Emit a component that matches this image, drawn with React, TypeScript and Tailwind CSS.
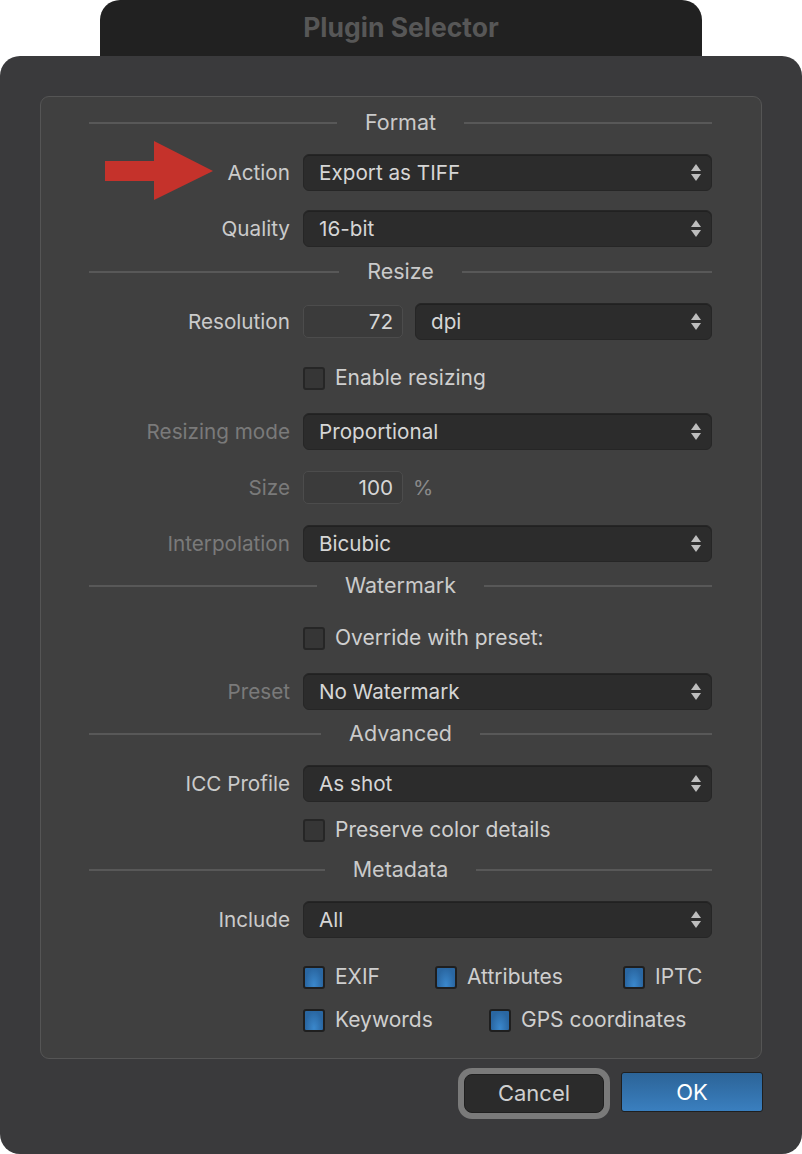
import React from 'react';

function SelectArrows() {
  return (
    <svg width="10" height="17" viewBox="0 0 10 17" className="shrink-0">
      <polygon points="5,0 10,7 0,7" fill="#bdbdbd" />
      <polygon points="0,10 10,10 5,17" fill="#bdbdbd" />
    </svg>
  );
}

function Select({ value, className = '' }: { value: string; className?: string }) {
  return (
    <div
      className={`h-[37px] flex items-center justify-between pl-[15px] pr-[10px] rounded-[6px] bg-[#2c2c2c] border border-[#262626] shadow-[inset_0_1px_0_rgba(0,0,0,0.25)] text-[20.7px] text-[#d6d6d6] ${className}`}
    >
      <span>{value}</span>
      <SelectArrows />
    </div>
  );
}

function NumberInput({ value }: { value: string }) {
  return (
    <div className="w-[100px] h-[33px] flex items-center justify-end pr-[9px] rounded-[5px] bg-[#3b3b3b] border border-[#4c4c4c] text-[20.7px] text-[#d6d6d6] shrink-0">
      {value}
    </div>
  );
}

function Checkbox({ label, checked = false }: { label: string; checked?: boolean }) {
  return (
    <div className="flex items-center gap-[10px] h-[24px]">
      {checked ? (
        <span className="w-[22px] h-[23px] rounded-[3px] border-2 border-[#1f1f1f] bg-[radial-gradient(ellipse_at_50%_90%,#3b88cc_0%,#2a67a2_70%)] shrink-0" />
      ) : (
        <span className="w-[22px] h-[23px] rounded-[3px] border-2 border-[#262626] bg-[#363636] shrink-0" />
      )}
      <span className="text-[21px] text-[#cfcfcf] whitespace-nowrap">{label}</span>
    </div>
  );
}

function SectionHeader({ title, className = '' }: { title: string; className?: string }) {
  return (
    <div className={`flex items-center gap-[28px] h-[24px] ${className}`}>
      <div className="flex-1 h-[2px] bg-[#585858]" />
      <span className="text-[21.5px] text-[#cacaca] leading-none">{title}</span>
      <div className="flex-1 h-[2px] bg-[#585858]" />
    </div>
  );
}

function Row({
  label,
  disabled = false,
  className = '',
  children,
}: {
  label?: string;
  disabled?: boolean;
  className?: string;
  children: React.ReactNode;
}) {
  return (
    <div className={`grid grid-cols-[201px_409px] gap-x-[13px] items-center ${className}`}>
      <span className={`text-right text-[20.7px] whitespace-nowrap ${disabled ? 'text-[#7a7a7a]' : 'text-[#cbcbcb]'}`}>
        {label}
      </span>
      <div>{children}</div>
    </div>
  );
}

export default function App() {
  return (
    <div className="relative w-[802px] h-[1154px] bg-white font-['Inter','Noto_Sans',sans-serif] flex flex-col">
      {/* Title tab */}
      <div className="ml-[100px] w-[602px] h-[56px] rounded-t-[20px] bg-[#212121] flex items-center justify-center">
        <span className="text-[26.5px] font-bold text-[#575757]">Plugin Selector</span>
      </div>

      {/* Window */}
      <div className="flex-1 rounded-[20px] bg-[#3a3a3c] pt-[40px] px-[40px] flex flex-col">
        <div className="rounded-[9px] border border-[#555555] bg-[#404040] pt-[14px] pl-[48px] pr-[49px] pb-[26px] flex flex-col">
          <SectionHeader title="Format" />
          <Row label="Action" className="mt-[19px]">
            <Select value="Export as TIFF" />
          </Row>
          <Row label="Quality" className="mt-[19px]">
            <Select value="16-bit" />
          </Row>

          <SectionHeader title="Resize" className="mt-[13px]" />
          <Row label="Resolution" className="mt-[19px]">
            <div className="flex items-center gap-[12px]">
              <NumberInput value="72" />
              <Select value="dpi" className="flex-1" />
            </div>
          </Row>
          <Row className="mt-[26px]">
            <Checkbox label="Enable resizing" />
          </Row>
          <Row label="Resizing mode" disabled className="mt-[23px]">
            <Select value="Proportional" />
          </Row>
          <Row label="Size" disabled className="mt-[19px]">
            <div className="flex items-center gap-[10px] h-[37px]">
              <NumberInput value="100" />
              <span className="text-[20.7px] text-[#8a8a8a]">%</span>
            </div>
          </Row>
          <Row label="Interpolation" disabled className="mt-[19px]">
            <Select value="Bicubic" />
          </Row>

          <SectionHeader title="Watermark" className="mt-[12px]" />
          <Row className="mt-[28px]">
            <Checkbox label="Override with preset:" />
          </Row>
          <Row label="Preset" disabled className="mt-[23px]">
            <Select value="No Watermark" />
          </Row>

          <SectionHeader title="Advanced" className="mt-[12px]" />
          <Row label="ICC Profile" className="mt-[19px]">
            <Select value="As shot" />
          </Row>
          <Row className="mt-[16px]">
            <Checkbox label="Preserve color details" />
          </Row>

          <SectionHeader title="Metadata" className="mt-[16px]" />
          <Row label="Include" className="mt-[19px]">
            <Select value="All" />
          </Row>
          <Row className="mt-[27px]">
            <div className="flex">
              <div className="w-[132px]">
                <Checkbox label="EXIF" checked />
              </div>
              <div className="w-[188px]">
                <Checkbox label="Attributes" checked />
              </div>
              <Checkbox label="IPTC" checked />
            </div>
          </Row>
          <Row className="mt-[19px]">
            <div className="flex">
              <div className="w-[186px]">
                <Checkbox label="Keywords" checked />
              </div>
              <Checkbox label="GPS coordinates" checked />
            </div>
          </Row>
        </div>

        {/* Buttons */}
        <div className="flex justify-end items-start gap-[11px] mt-[9px] -mr-[1px]">
          <div className="rounded-[14px] bg-[#7a7a7a] p-[6px]">
            <button className="w-[140px] h-[39px] rounded-[8px] bg-[#2b2b2b] border border-[#1f1f1f] text-[22px] text-[#cfcfcf] flex items-center justify-center">
              Cancel
            </button>
          </div>
          <button className="mt-[4px] w-[142px] h-[40px] rounded-[3px] border border-[#1f1f1f] bg-gradient-to-b from-[#2c6498] to-[#3a7fbf] text-[22px] text-white flex items-center justify-center">
            OK
          </button>
        </div>
      </div>

      {/* Annotation arrow */}
      <svg className="absolute left-[105px] top-[141px]" width="110" height="60" viewBox="0 0 110 60">
        <polygon points="0,20 49,20 49,0 108,30 49,59 49,40 0,40" fill="#c5322b" />
      </svg>
    </div>
  );
}
